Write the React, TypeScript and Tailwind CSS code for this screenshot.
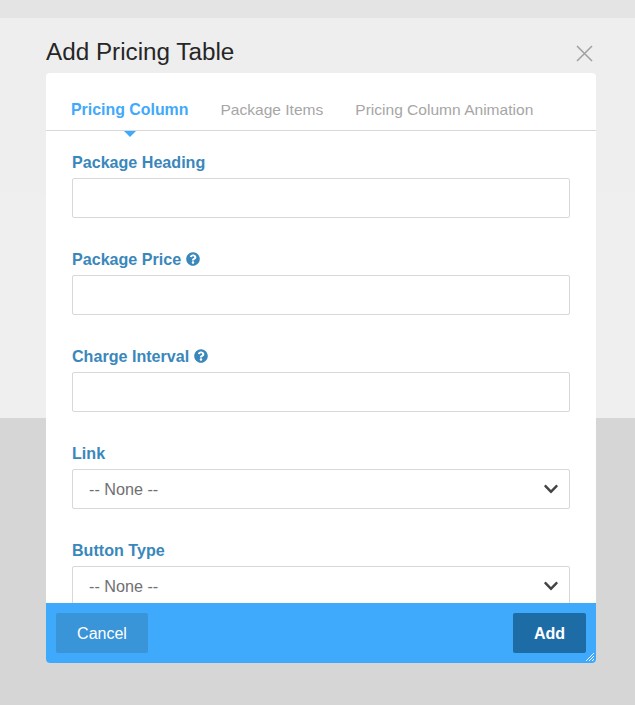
import { FaChevronDown, FaQuestionCircle } from "react-icons/fa";

const tabs = ["Pricing Column", "Package Items", "Pricing Column Animation"];

function Label({ text, help }: { text: string; help?: boolean }) {
  return (
    <label className="flex items-center gap-[5px] h-[22px] mb-[5px] text-[16.1px] font-bold leading-[22px] text-[#3a87bb]">
      {text}
      {help && <FaQuestionCircle className="w-[14px] h-[14px]" />}
    </label>
  );
}

function TextField({ label, help }: { label: string; help?: boolean }) {
  return (
    <div className="mb-[30px]">
      <Label text={label} help={help} />
      <input className="block w-full h-[40px] bg-white border border-[#d8d8d8] rounded-[2px]" />
    </div>
  );
}

function SelectField({ label }: { label: string }) {
  return (
    <div className="mb-[30px]">
      <Label text={label} />
      <div className="flex items-center justify-between w-full h-[40px] pl-[16px] pr-[10px] bg-white border border-[#d8d8d8] rounded-[2px] text-[16.2px] text-[#707070]">
        <span>-- None --</span>
        <FaChevronDown className="w-[16px] h-[16px] text-[#444444]" />
      </div>
    </div>
  );
}

export default function App() {
  return (
    <div className="relative w-[635px] h-[705px] overflow-hidden bg-[#d6d6d6] font-['Liberation_Sans',Arial,sans-serif]">
      {/* page behind the dialog */}
      <div className="h-[18px] bg-[#e4e4e4]" />
      <div className="h-[175px] bg-[#eeeeee]" />
      <div className="h-[225px] bg-[#efefef]" />

      {/* Dialog */}
      <div className="absolute left-[46px] top-[18px] w-[550px]">
        <div className="relative h-[55px]">
          <h2 className="pt-[18px] text-[24.25px] leading-[32px] text-[#262626]">Add Pricing Table</h2>
          <svg className="absolute right-[3px] top-[27px] w-[17px] h-[17px]" viewBox="0 0 17 17" fill="none" stroke="#a0a0a0" strokeWidth="1.5">
            <path d="M1 1l15 15M16 1L1 16" />
          </svg>
        </div>

        <div className="flex flex-col h-[590px] bg-white rounded-[4px] overflow-hidden">
          {/* Tabs */}
          <div className="relative flex shrink-0 gap-[32px] h-[58px] pl-[25px] pt-[25.5px] border-b border-[#d8d8d8] text-[15.55px] leading-[22px]">
            {tabs.map((tab, i) => (
              <span key={tab} className={i === 0 ? "font-bold text-[15.9px] text-[#3fa9fc]" : "text-[#a6a6a6]"}>
                {tab}
              </span>
            ))}
            <span className="absolute left-[78px] top-[58px] w-0 h-0 border-x-[6px] border-t-[6px] border-x-transparent border-t-[#3fa9fc]" />
          </div>

          {/* Form */}
          <div className="flex-1 min-h-0 overflow-hidden pt-[20px] pl-[26px] pr-[26px]">
            <TextField label="Package Heading" />
            <TextField label="Package Price" help />
            <TextField label="Charge Interval" help />
            <SelectField label="Link" />
            <SelectField label="Button Type" />
          </div>

          {/* Footer */}
          <div className="relative flex shrink-0 items-center justify-between h-[60px] pl-[10px] pr-[10px] bg-[#3fa9fc]">
            <button className="w-[92px] h-[40px] pt-[2px] rounded-[2px] bg-[#3a94d8] text-[16px] text-white">Cancel</button>
            <button className="w-[73px] h-[40px] pt-[2px] rounded-[2px] bg-[#1e6ca6] text-[16px] font-bold text-white">Add</button>
            <svg className="absolute right-[2px] bottom-[2px] w-[8px] h-[8px]" viewBox="0 0 8 8" stroke="#ffffff" strokeWidth="1" fill="none">
              <path d="M0 8L8 0M3 8L8 3M6 8L8 6" />
            </svg>
          </div>
        </div>
      </div>
    </div>
  );
}
